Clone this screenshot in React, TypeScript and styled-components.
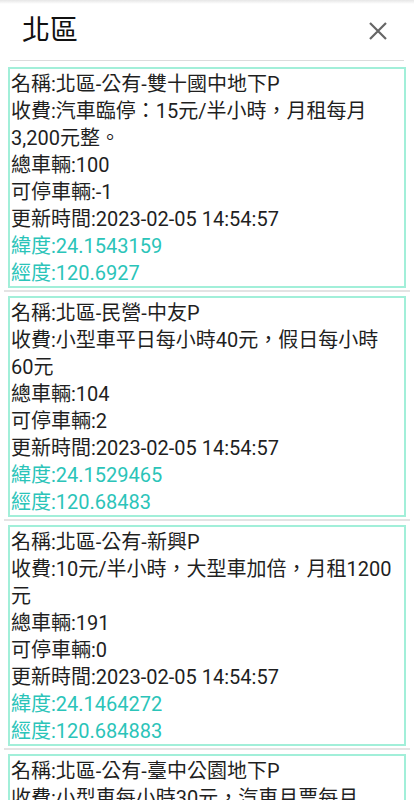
import React from "react";
import styled, { createGlobalStyle } from "styled-components";

const Global = createGlobalStyle`
  html, body { margin: 0; padding: 0; background: #fff; }
  body {
    font-family: Roboto, "Noto Sans CJK TC", "Noto Sans", sans-serif;
    color: #1f1f1f;
  }
  * { box-sizing: border-box; }
`;

const Page = styled.div`
  display: flex;
  flex-direction: column;
  background: linear-gradient(to bottom, #e6e6e6 0px, #ffffff 4px, #ffffff 100%);
`;

const Header = styled.header`
  height: 61px;
  margin: 0 10px;
  padding: 2px 14px 0 12px;
  display: flex;
  align-items: center;
  justify-content: space-between;
  border-bottom: 1px solid #dcdcdc;
`;

const Title = styled.h1`
  margin: 0;
  font-size: 28px;
  font-weight: 400;
  color: #111;
  line-height: 1;
`;

const CloseButton = styled.button`
  width: 24px;
  height: 24px;
  border: none;
  background: transparent;
  padding: 0;
  display: flex;
  align-items: center;
  justify-content: center;
`;

const List = styled.div`
  display: flex;
  flex-direction: column;
  padding-top: 2px;
`;

const Item = styled.div`
  margin: 0 4px;
  padding: 4px 4px 2px;
  border-bottom: 2px solid #e3e3e3;
`;

const Card = styled.div`
  border: 2px solid #a2efd9;
  padding: 2px 12px 0 1px;
  font-size: 20px;
  line-height: 27px;
  height: 221px;
  overflow: hidden;
`;

const Line = styled.div<{ $accent?: boolean }>`
  color: ${(p) => (p.$accent ? "#2bc4b9" : "#1f1f1f")};
`;

type Lot = {
  name: string;
  fee: string;
  total: string;
  avail: string;
  time: string;
  lat: string;
  lng: string;
};

const lots: Lot[] = [
  {
    name: "北區-公有-雙十國中地下P",
    fee: "汽車臨停：15元/半小時，月租每月3,200元整。",
    total: "100",
    avail: "-1",
    time: "2023-02-05 14:54:57",
    lat: "24.1543159",
    lng: "120.6927",
  },
  {
    name: "北區-民營-中友P",
    fee: "小型車平日每小時40元，假日每小時60元",
    total: "104",
    avail: "2",
    time: "2023-02-05 14:54:57",
    lat: "24.1529465",
    lng: "120.68483",
  },
  {
    name: "北區-公有-新興P",
    fee: "10元/半小時，大型車加倍，月租1200元",
    total: "191",
    avail: "0",
    time: "2023-02-05 14:54:57",
    lat: "24.1464272",
    lng: "120.684883",
  },
  {
    name: "北區-公有-臺中公園地下P",
    fee: "小型車每小時30元，汽車月票每月3,000元",
    total: "287",
    avail: "12",
    time: "2023-02-05 14:54:57",
    lat: "24.1446518",
    lng: "120.683715",
  },
];

export default function App() {
  return (
    <>
      <Global />
      <Page>
        <Header>
          <Title>北區</Title>
          <CloseButton aria-label="close">
            <svg width="20" height="20" viewBox="0 0 20 20">
              <path d="M2 2 L18 18 M18 2 L2 18" stroke="#666" strokeWidth="2.2" strokeLinecap="butt" />
            </svg>
          </CloseButton>
        </Header>
        <List>
          {lots.map((l) => (
            <Item key={l.name}>
              <Card>
                <Line>名稱:{l.name}</Line>
                <Line>收費:{l.fee}</Line>
                <Line>總車輛:{l.total}</Line>
                <Line>可停車輛:{l.avail}</Line>
                <Line>更新時間:{l.time}</Line>
                <Line $accent>緯度:{l.lat}</Line>
                <Line $accent>經度:{l.lng}</Line>
              </Card>
            </Item>
          ))}
        </List>
      </Page>
    </>
  );
}
